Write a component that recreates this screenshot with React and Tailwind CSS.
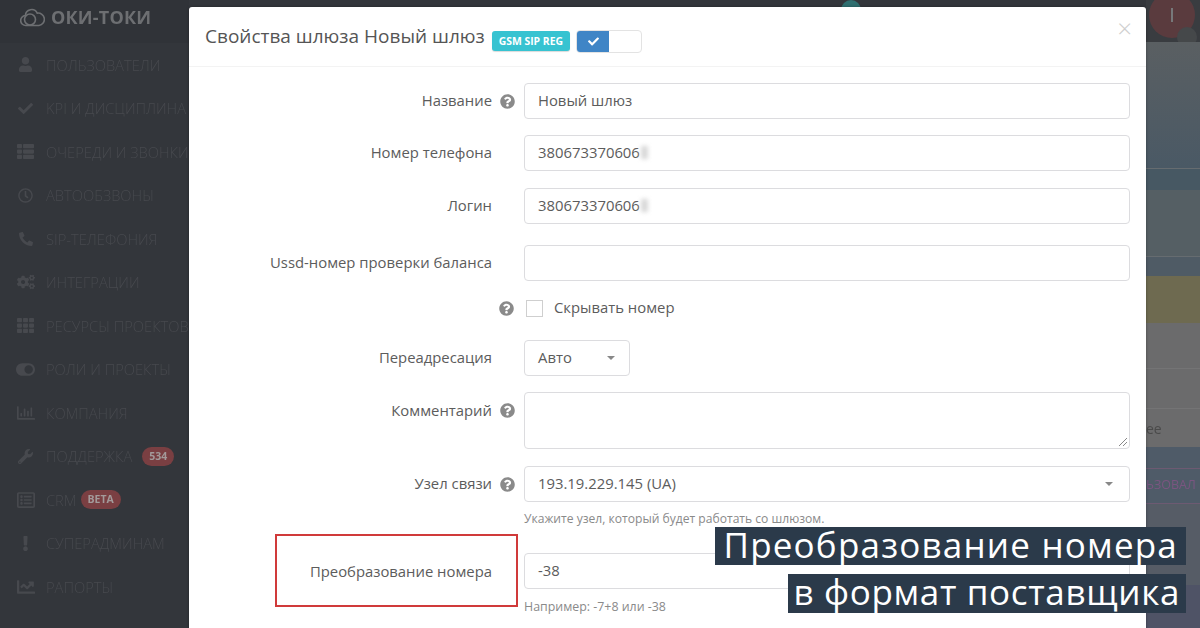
import { FaUser, FaCheck, FaThList, FaRegClock, FaPhone, FaCogs, FaTh, FaToggleOn, FaRegChartBar, FaWrench, FaRegListAlt, FaExclamation, FaChartLine, FaQuestionCircle } from "react-icons/fa";

const menu = [
    { icon: FaUser, size: "text-[15px]", label: "ПОЛЬЗОВАТЕЛИ" },
    { icon: FaCheck, size: "text-[15px]", label: "KPI И ДИСЦИПЛИНА" },
    { icon: FaThList, size: "text-[17px]", label: "ОЧЕРЕДИ И ЗВОНКИ" },
    { icon: FaRegClock, size: "text-[15px]", label: "АВТООБЗВОНЫ" },
    { icon: FaPhone, size: "text-[14px] -scale-x-100", label: "SIP-ТЕЛЕФОНИЯ" },
    { icon: FaCogs, size: "text-[18px]", label: "ИНТЕГРАЦИИ" },
    { icon: FaTh, size: "text-[17px]", label: "РЕСУРСЫ ПРОЕКТОВ" },
    { icon: FaToggleOn, size: "text-[19px]", label: "РОЛИ И ПРОЕКТЫ" },
    { icon: FaRegChartBar, size: "text-[18px]", label: "КОМПАНИЯ" },
    { icon: FaWrench, size: "text-[15px]", label: "ПОДДЕРЖКА", badge: "534", gap: "ml-[10px]" },
    { icon: FaRegListAlt, size: "text-[18px]", label: "CRM", badge: "BETA", gap: "ml-[4px]" },
    { icon: FaExclamation, size: "text-[15px]", label: "СУПЕРАДМИНАМ" },
    { icon: FaChartLine, size: "text-[18px]", label: "РАПОРТЫ" },
];

function Help() {
    return <FaQuestionCircle className="text-[15px] text-[#8a8a8a]" />;
}

function Label({ children, help }) {
    return (
        <>
            <span className="w-[303px] shrink-0 pb-[1px] text-right text-[14.85px] text-[#5c5c5c]">{children}</span>
            <span className="flex w-[32px] shrink-0 justify-center pr-[2px]">{help && <Help />}</span>
        </>
    );
}

function Field({ value, blur }) {
    return (
        <div className="flex h-[36px] w-[606px] items-center rounded-[4px] border border-[#dcdcdf] bg-white px-[13px] pb-[1px] text-[14.85px] text-[#5c5c5c]">
            {value}
            {blur && <span className="ml-[1px] h-[13px] w-[7px] bg-[#d8d8d8] blur-[2px]" />}
        </div>
    );
}

function Caret() {
    return <span className="h-0 w-0 border-x-[4px] border-t-[4px] border-x-transparent border-t-[#888]" />;
}

export default function App() {
    return (
        <div className="relative flex h-[628px] w-[1200px] overflow-hidden bg-[#33363b] font-['Open_Sans',sans-serif]">
            {/* sidebar */}
            <aside className="w-[189px] shrink-0 whitespace-nowrap blur-[0.5px]">
                <div className="flex h-[43px] items-center gap-[6px] bg-[#303338] pb-[10px] pl-[20px]">
                    <svg width="25" height="20" viewBox="0 0 25 20" fill="none" stroke="#6d6f72" strokeWidth="1.6">
                        <path d="M6 18.5a5 5 0 0 1-.6-10 6.2 6.2 0 0 1 11.8-2.4 5.2 5.2 0 0 1 1.8 12.4z" />
                        <circle cx="10" cy="12.5" r="5.5" />
                    </svg>
                    <span className="text-[18px] font-bold leading-none tracking-[0.2px] text-[#6d6f72]">ОКИ-ТОКИ</span>
                </div>
                <nav className="flex flex-col">
                    {menu.map((item) => (
                        <div key={item.label} className="flex h-[43.5px] items-center text-[#47494e]">
                            <span className="flex w-[46px] shrink-0 justify-center pl-[5px]">
                                <item.icon className={item.size} />
                            </span>
                            <span className="text-[14.7px] font-light">{item.label}</span>
                            {item.badge && (
                                <span className={`${item.gap} rounded-full bg-[#7a3f42] px-[7px] text-[10.5px] font-bold leading-[19px] text-[#a39a9a]`}>
                                    {item.badge}
                                </span>
                            )}
                        </div>
                    ))}
                </nav>
            </aside>

            {/* modal */}
            <main className="z-10 mt-[7px] h-[640px] w-[957px] shrink-0 rounded-t-[3px] bg-white shadow-[0_0_3px_rgba(0,0,0,0.35)]">
                <header className="flex h-[60px] items-center gap-[6px] border-b border-[#f3f3f3] pl-[16px] pr-[14px]">
                    <h1 className="text-[19px] text-[#555]">Свойства шлюза Новый шлюз</h1>
                    <span className="ml-[1px] mt-[9px] rounded-[3px] bg-[#37c3d1] px-[7px] text-[10.4px] font-bold leading-[20px] text-white shadow-[0_1px_1px_rgba(0,0,0,0.15)]">GSM SIP REG</span>
                    <div className="mt-[9px] flex h-[23px] w-[66px] overflow-hidden rounded-[4px] border border-[#e3e3e3]">
                        <span className="flex w-[32px] items-center justify-center bg-[#3f85c6]">
                            <FaCheck className="text-[11px] text-white" />
                        </span>
                    </div>
                    <span className="ml-auto mt-[8px] self-start text-[26px] font-light leading-none text-[#cfcfcf]">×</span>
                </header>

                <form className="pt-[16px]">
                    <div className="flex items-center">
                        <Label help>Название</Label>
                        <Field value="Новый шлюз" />
                    </div>
                    <div className="mt-[16px] flex items-center">
                        <Label>Номер телефона</Label>
                        <Field value="380673370606" blur />
                    </div>
                    <div className="mt-[17px] flex items-center">
                        <Label>Логин</Label>
                        <Field value="380673370606" blur />
                    </div>
                    <div className="mt-[21px] flex items-center">
                        <Label>Ussd-номер проверки баланса</Label>
                        <Field value="" />
                    </div>
                    <div className="mt-[19px] flex h-[17px] items-center">
                        <span className="flex w-[337px] shrink-0 justify-end pr-[12px]"><Help /></span>
                        <span className="h-[17px] w-[17px] border border-[#cfcfcf] bg-white" />
                        <span className="ml-[11px] pb-[2px] text-[14.85px] text-[#5c5c5c]">Скрывать номер</span>
                    </div>
                    <div className="mt-[23px] flex items-center">
                        <Label>Переадресация</Label>
                        <div className="flex h-[36px] w-[106px] items-center justify-between rounded-[4px] border border-[#dcdcdf] pb-[1px] pl-[13px] pr-[14px] text-[14.85px] text-[#5c5c5c]">
                            Авто
                            <Caret />
                        </div>
                    </div>
                    <div className="mt-[16px] flex items-start">
                        <div className="flex items-center pt-[7px]">
                            <Label help>Комментарий</Label>
                        </div>
                        <div className="relative h-[57px] w-[606px] rounded-[4px] border border-[#dcdcdf]">
                            <svg className="absolute bottom-[2px] right-[2px]" width="8" height="8" viewBox="0 0 8 8" stroke="#888" strokeWidth="1">
                                <path d="M0 8 8 0M4 8l4-4" />
                            </svg>
                        </div>
                    </div>
                    <div className="mt-[17px] flex items-center">
                        <Label help>Узел связи</Label>
                        <div className="flex h-[36px] w-[606px] items-center justify-between rounded-[4px] border border-[#dcdcdf] pb-[1px] pl-[13px] pr-[16px] text-[14.85px] text-[#5c5c5c]">
                            193.19.229.145 (UA)
                            <Caret />
                        </div>
                    </div>
                    <p className="ml-[335px] mt-[10px] text-[12.1px] leading-[14px] text-[#8a8a8a]">Укажите узел, который будет работать со шлюзом.</p>
                    <div className="mt-[27px] flex items-center">
                        <span className="relative w-[303px] shrink-0 text-right text-[14.85px] leading-[21px] text-[#5c5c5c]">
                            Преобразование номера
                            <span className="absolute left-[86px] top-[-27px] h-[73px] w-[243px] border-2 border-[#d03a3a]" />
                        </span>
                        <span className="w-[32px] shrink-0" />
                        <Field value="-38" />
                    </div>
                    <p className="ml-[335px] mt-[10px] text-[12.4px] leading-[16px] text-[#8a8a8a]">Например: -7+8 или -38</p>
                </form>
            </main>

            {/* page behind the modal */}
            <div className="flex flex-1 flex-col whitespace-nowrap text-[14px] blur-[0.5px]">
                <div className="relative h-[42px] overflow-hidden bg-[#393c40]">
                    <span className="absolute left-[3px] top-[-8px] h-[46px] w-[46px] rounded-full bg-[#5a3b3e]" />
                    <span className="absolute left-[25px] top-[8px] h-[14px] w-[2px] bg-[#77787a]" />
                    <span className="absolute left-[31px] top-[27px] h-[20px] w-[20px] rounded-full bg-[#45484a]" />
                </div>
                <div className="h-[126px] bg-gradient-to-b from-[#5a5f62] to-[#4a5965]" />
                <div className="h-[22px] border-t border-[#666c70] bg-[#475863]" />
                <div className="h-[66px] bg-[#555f64]" />
                <div className="h-[20px] border-t border-[#666c70] bg-[#4f5b65]" />
                <div className="h-[47px] bg-[#6e6a50]" />
                <div className="flex h-[124px] flex-col bg-[#6b6b6c]">
                    <div className="h-[45px]" />
                    <div className="h-[40px] border-t border-[#747475]" />
                    <div className="flex-1 border-t border-[#747475] pt-[9px] text-[#4a4a4a]">ee</div>
                </div>
                <div className="h-[21px] bg-[#4f5b68]" />
                <div className="h-[36px] border-y border-[#6d5a72] bg-[#4f5b68] pt-[7px] text-[12.5px] text-[#7a5580]">ЬЗОВАЛ</div>
                <div className="h-[81px] bg-[#565c66]" />
                <div className="flex-1 bg-[#4f5366]" />
            </div>

            {/* notification dot above the modal */}
            <span className="absolute left-[841px] top-0 h-[20px] w-[20px] rounded-full bg-[#2f6f70]" />

            {/* caption */}
            <div className="absolute bottom-[15px] right-[14px] z-20 flex flex-col items-end gap-[9px] text-[35px] text-white">
                <span className="bg-[#2b3a4a] px-[8px] pb-[3px] leading-[35px] tracking-[1.2px]">Преобразование номера</span>
                <span className="bg-[#2b3a4a] px-[6px] pb-[3px] leading-[36px] tracking-[0.65px]">в формат поставщика</span>
            </div>
        </div>
    );
}
